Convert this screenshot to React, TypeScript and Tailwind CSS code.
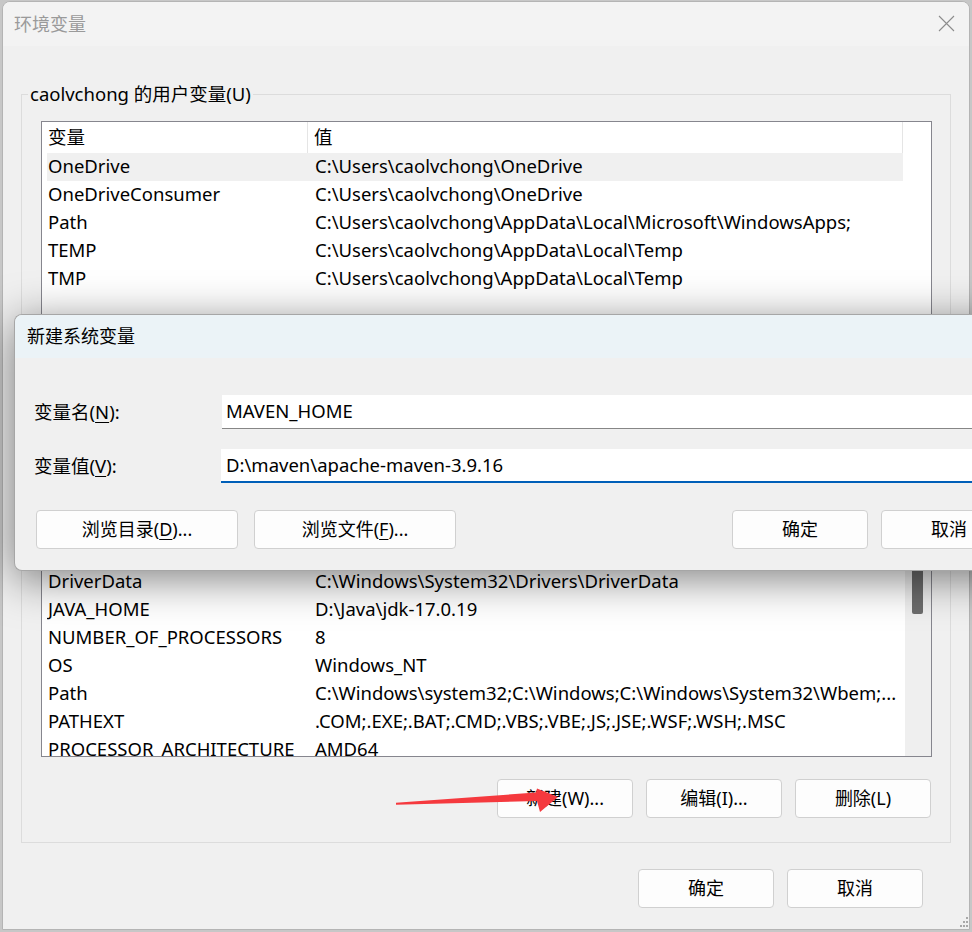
import React from "react";

const FONT = "font-['Noto_Sans','Noto_Sans_CJK_SC',sans-serif]";

type Row = [string, string];

const userVars: Row[] = [
  ["OneDrive", "C:\\Users\\caolvchong\\OneDrive"],
  ["OneDriveConsumer", "C:\\Users\\caolvchong\\OneDrive"],
  ["Path", "C:\\Users\\caolvchong\\AppData\\Local\\Microsoft\\WindowsApps;"],
  ["TEMP", "C:\\Users\\caolvchong\\AppData\\Local\\Temp"],
  ["TMP", "C:\\Users\\caolvchong\\AppData\\Local\\Temp"],
];

const systemVars: Row[] = [
  ["ComSpec", "C:\\Windows\\system32\\cmd.exe"],
  ["DriverData", "C:\\Windows\\System32\\Drivers\\DriverData"],
  ["JAVA_HOME", "D:\\Java\\jdk-17.0.19"],
  ["NUMBER_OF_PROCESSORS", "8"],
  ["OS", "Windows_NT"],
  ["Path", "C:\\Windows\\system32;C:\\Windows;C:\\Windows\\System32\\Wbem;..."],
  ["PATHEXT", ".COM;.EXE;.BAT;.CMD;.VBS;.VBE;.JS;.JSE;.WSF;.WSH;.MSC"],
  ["PROCESSOR_ARCHITECTURE", "AMD64"],
  ["PROCESSOR_IDENTIFIER", "AMD64 Family 25 Model 80 Stepping 0, AuthenticAMD"],
];

function Btn({ children, className = "" }: { children: React.ReactNode; className?: string }) {
  return (
    <button
      className={`flex h-[39px] w-[136px] shrink-0 items-center justify-center rounded-[4px] border border-[#d0d0d0] bg-[#fdfdfd] text-[18px] text-black ${className}`}
    >
      {children}
    </button>
  );
}

function VarList({
  rows,
  height,
  selected,
  scrollbar,
}: {
  rows: Row[];
  height: string;
  selected?: number;
  scrollbar?: boolean;
}) {
  return (
    <div className={`flex ${height} overflow-hidden border border-[#86868e] bg-white`}>
      <div className="flex min-w-0 flex-1 flex-col">
        {/* column headers */}
        <div className="ml-[5px] flex h-[31px] shrink-0 items-center text-[18.5px]">
          <div className="flex h-full w-[261px] items-center border-r border-[#e5e5e5] pb-[2px] pl-[1px]">变量</div>
          <div className="flex h-full flex-1 items-center border-r border-[#e5e5e5] pb-[2px] pl-[6px]">值</div>
        </div>
        {rows.map(([name, value], i) => (
          <div
            key={name + i}
            className={`ml-[5px] flex h-[28px] shrink-0 items-center whitespace-nowrap pb-[2px] text-[18.5px] ${
              i === selected ? "bg-[#f0f0f0]" : ""
            }`}
          >
            <div className="w-[261px] shrink-0 overflow-hidden pl-[1px]">{name}</div>
            <div className="min-w-0 flex-1 overflow-hidden pl-[7px]">{value}</div>
          </div>
        ))}
      </div>
      {scrollbar ? (
        <div className="w-[26px] shrink-0 bg-[#efefef] pl-[7px]">
          <div className="mt-[12px] h-[93px] w-[11px] rounded-[2px] bg-[#6c6c6c]" />
        </div>
      ) : (
        <div className="w-[28px] shrink-0" />
      )}
    </div>
  );
}

function Accel({ k }: { k: string }) {
  return <span className="underline underline-offset-[3px]">{k}</span>;
}

export default function App() {
  return (
    <div className={`relative h-[932px] w-[972px] overflow-hidden bg-[#c7c7c7] text-black ${FONT}`}>
      {/* Environment variables window */}
      <div className="ml-[2px] mt-[1px] flex h-[929px] w-[968px] flex-col overflow-hidden rounded-t-[8px] border border-[#b4b4b4] bg-[#f0f0f0]">
        <div className="flex h-[44px] shrink-0 items-center justify-between bg-[#f3f3f3] pl-[11px] pr-[14px]">
          <span className="text-[18px] text-[#9a9a9a]">环境变量</span>
          <svg width="17" height="17" viewBox="0 0 17 17" className="mb-[1px]">
            <path d="M1 1 L16 16 M16 1 L1 16" stroke="#8c8c8c" strokeWidth="1.1" fill="none" />
          </svg>
        </div>

        <div className="flex flex-1 flex-col px-[18px]">
          <fieldset className="mt-[36px] border border-[#dcdcdc] pb-[24px] pt-[15px]">
            <legend className="ml-[6px] px-[2px] text-[18.5px] leading-[24px]">caolvchong 的用户变量(U)</legend>
            <div className="pl-[19px] pr-[18px]">
              <VarList rows={userVars} height="h-[254px]" selected={0} />
              <div className="mt-[23px] flex justify-end gap-[13px] pr-[1px]">
                <Btn>新建(N)...</Btn>
                <Btn>编辑(E)...</Btn>
                <Btn>删除(D)</Btn>
              </div>
            </div>
          </fieldset>

          <fieldset className="mt-[7px] border border-[#dcdcdc] pb-[24px] pt-[15px]">
            <legend className="ml-[6px] px-[2px] text-[18.5px] leading-[24px]">系统变量(S)</legend>
            <div className="pl-[19px] pr-[18px]">
              <VarList rows={systemVars} height="h-[249px]" scrollbar />
              <div className="mt-[22px] flex justify-end gap-[13px] pr-[1px]">
                <Btn>新建(W)...</Btn>
                <Btn>编辑(I)...</Btn>
                <Btn>删除(L)</Btn>
              </div>
            </div>
          </fieldset>

          <div className="mt-[26px] flex justify-end gap-[13px] pr-[28px]">
            <Btn>确定</Btn>
            <Btn>取消</Btn>
          </div>
        </div>
      </div>

      {/* size grip */}
      <svg className="absolute left-[958px] top-[916px]" width="12" height="14" viewBox="0 0 12 14">
        <g fill="#a8a8a8">
          <rect x="8" y="1" width="2" height="2" />
          <rect x="5" y="5" width="2" height="2" />
          <rect x="8" y="5" width="2" height="2" />
          <rect x="2" y="9" width="2" height="2" />
          <rect x="5" y="9" width="2" height="2" />
          <rect x="8" y="9" width="2" height="2" />
        </g>
      </svg>

      {/* New system variable dialog */}
      <div className="absolute left-[14px] top-[314px] flex h-[257px] w-[1020px] flex-col overflow-hidden rounded-l-[8px] border border-r-0 border-[#a6a6a6] bg-[#f0f0f0] shadow-[0_8px_44px_rgba(0,0,0,0.5)]">
        <div className="flex h-[43px] shrink-0 items-center bg-[#ebf3f7] pb-[1px] pl-[12px] text-[18px]">新建系统变量</div>
        <div className="flex flex-1 flex-col pl-[19px] pr-[17px] pt-[37px]">
          <div className="flex items-center">
            <label className="w-[188px] shrink-0 text-[18.5px]">
              变量名(<Accel k="N" />):
            </label>
            <input
              readOnly
              value="MAVEN_HOME"
              className="h-[34px] flex-1 border-b border-[#868686] bg-white pb-[2px] pl-[4px] text-[18.5px] outline-none"
            />
          </div>
          <div className="mt-[20px] flex items-center">
            <label className="w-[187px] shrink-0 text-[18.5px]">
              变量值(<Accel k="V" />):
            </label>
            <input
              readOnly
              value={"D:\\maven\\apache-maven-3.9.16"}
              className="h-[34px] flex-1 border-b-2 border-[#005fb8] bg-white pb-[1px] pl-[5px] text-[18.5px] outline-none"
            />
          </div>
          <div className="mt-[27px] ml-[2px] flex gap-[16px]">
            <Btn className="h-[38px] w-[202px]">
              浏览目录(<Accel k="D" />)...
            </Btn>
            <Btn className="h-[38px] w-[202px]">
              浏览文件(<Accel k="F" />)...
            </Btn>
            <div className="ml-auto flex gap-[13px]">
              <Btn className="h-[38px]">确定</Btn>
              <Btn className="h-[38px]">取消</Btn>
            </div>
          </div>
        </div>
      </div>

      {/* annotation arrow */}
      <svg className="absolute left-0 top-0" width="972" height="932" viewBox="0 0 972 932">
        <polygon
          points="396,802.8 536,792.5 537,788.5 558,797 540,812 537,801 396,804.8"
          fill="#f5393e"
        />
      </svg>
    </div>
  );
}
